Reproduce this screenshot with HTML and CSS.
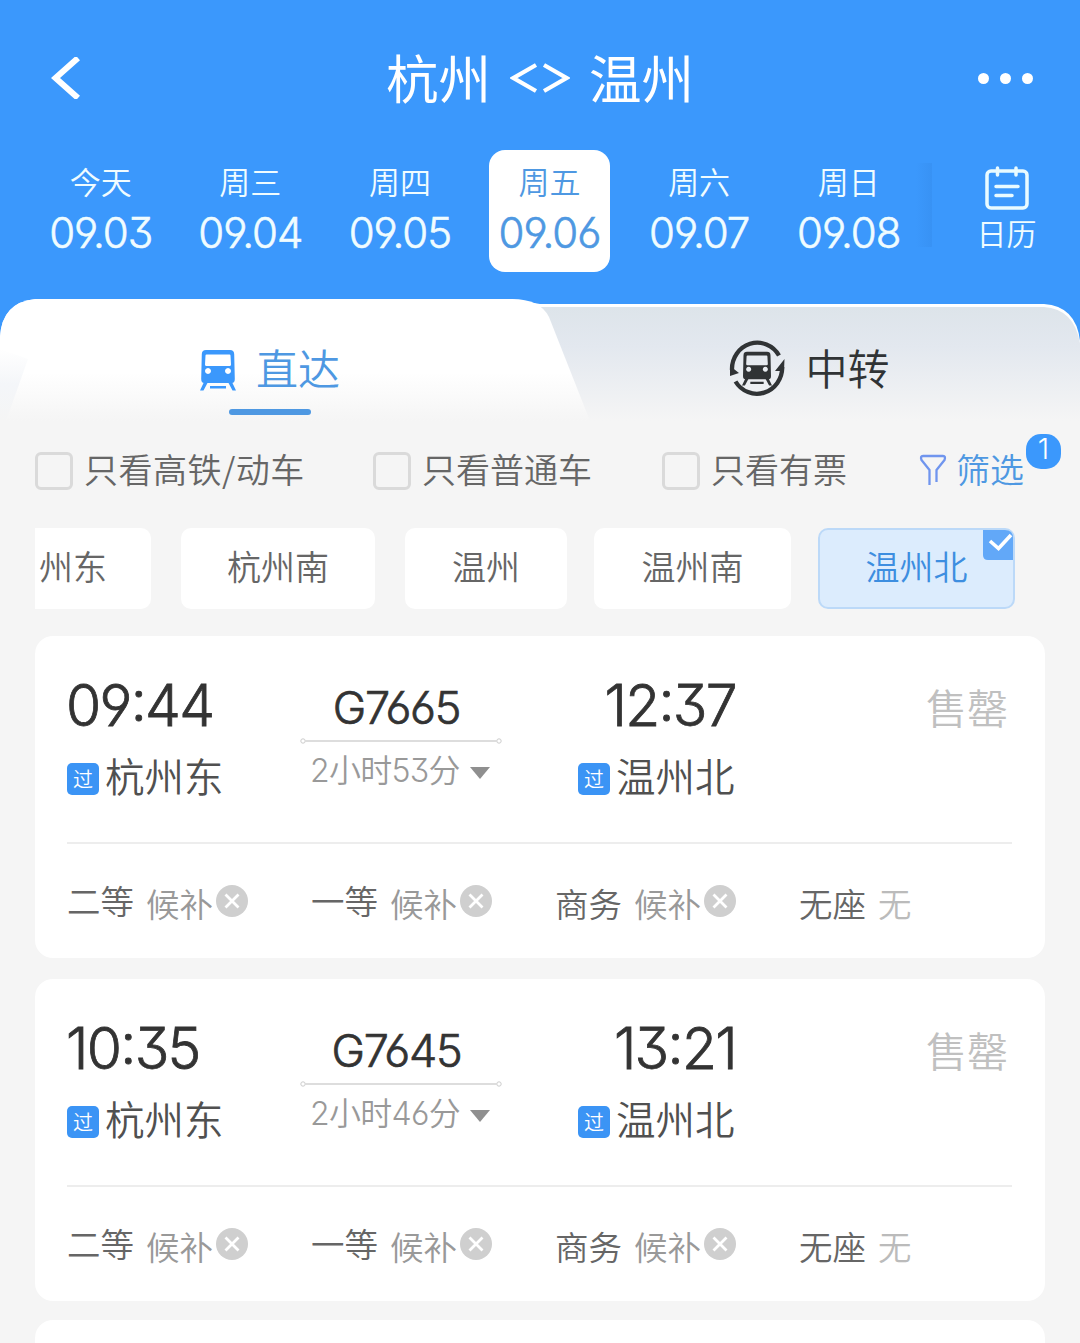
FILE: index.html
```html
<!DOCTYPE html>
<html lang="zh-CN">
<head>
    <meta charset="UTF-8">
    <meta name="viewport" content="width=device-width, initial-scale=1.0">
    <title>杭州 - 温州</title>
    <link rel="stylesheet" href="styles.css">
</head>
<body>
    <!-- shared icons -->
    <svg class="defs" width="0" height="0">
        <symbol id="train" viewBox="0 0 36 42">
            <path fill-rule="evenodd" d="M6 1h24q4 0 4.200 4l.6 25q0 4-3 4H4.200q-3 0-3-4l.6-25Q2 1 6 1zM5.500 6.500l-.5 9q0 1.500 1.500 1.500h23q1.500 0 1.500-1.500l-.5-9q0-1-1-1h-23q-1 0-1 1zM8 19a3 3 0 1 0 .01 0zM28 19a3 3 0 1 0 .01 0z"/>
            <path d="M4 33h4l-4.500 8.500H0zM28 33h4l4 8.500h-3.500zM10 37h16v2.500H10z"/>
        </symbol>
        <symbol id="close" viewBox="0 0 32 32">
            <circle cx="16" cy="16" r="16" fill="#cfcfcf"/>
            <path d="M9.500 9.500l13 13M22.500 9.500l-13 13" stroke="#fff" stroke-width="2.800" fill="none"/>
        </symbol>
        <symbol id="route" viewBox="0 0 202 8">
            <path d="M5.500 4h191" stroke="#d2d2d2" stroke-width="1.500"/>
            <circle cx="3" cy="4" r="2.200" fill="#fff" stroke="#ccc"/>
            <circle cx="199" cy="4" r="2.200" fill="#fff" stroke="#ccc"/>
        </symbol>
    </svg>

    <header class="header">
        <div class="topbar">
            <svg width="30" height="42" viewBox="0 0 30 42"><path d="M27 1L4.500 21 27 41" fill="none" stroke="#fff" stroke-width="6"/></svg>
            <h1 class="title">
                <span>杭州</span>
                <svg width="60" height="32" viewBox="0 0 60 32"><path d="M26 3L3.500 16 26 29M34 3L56.500 16 34 29" fill="none" stroke="#fff" stroke-width="4.200"/></svg>
                <span>温州</span>
            </h1>
            <div class="more"><i></i><i></i><i></i></div>
        </div>
        <nav class="dates">
            <a class="day"><span>今天</span><b>09.03</b></a>
            <a class="day"><span>周三</span><b>09.04</b></a>
            <a class="day"><span>周四</span><b>09.05</b></a>
            <a class="day active"><span>周五</span><b>09.06</b></a>
            <a class="day"><span>周六</span><b>09.07</b></a>
            <a class="day"><span>周日</span><b>09.08</b></a>
            <div class="edge"></div>
            <a class="calendar">
                <svg width="46" height="46" viewBox="0 0 46 46" fill="none" stroke="#e9fbff" stroke-width="3.500" stroke-linecap="round"><rect x="3" y="6" width="40" height="37" rx="4"/><path d="M13.500 3v7M32 3v7M12 21.500h22M12 30.500h16"/></svg>
                <span>日历</span>
            </a>
        </nav>
    </header>

    <section class="tabs">
        <svg class="tabs-bg" width="1080" height="122" viewBox="0 0 1080 122">
            <defs>
                <linearGradient id="gray" x1="0" y1="0" x2="0" y2="1">
                    <stop offset="0" stop-color="#dde4ea"/>
                    <stop offset=".35" stop-color="#e3e8ef"/>
                    <stop offset="1" stop-color="#f5f5f5"/>
                </linearGradient>
                <linearGradient id="white" x1="0" y1="0" x2="0" y2="1">
                    <stop offset="0" stop-color="#fff"/>
                    <stop offset=".6" stop-color="#fff"/>
                    <stop offset="1" stop-color="#f5f5f5"/>
                </linearGradient>
                <linearGradient id="shade" x1="0" y1="0" x2="0" y2="1">
                    <stop offset="0" stop-color="#f4f6f9" stop-opacity="0"/>
                    <stop offset=".5" stop-color="#f4f6f9"/>
                    <stop offset="1" stop-color="#f5f5f5"/>
                </linearGradient>
            </defs>
            <path d="M0 122V38Q2 3 36 0H510L540 5H1044Q1076 7 1080 42V122z" fill="#fff"/>
            <path d="M530 8H1044Q1074 10 1080 44V122H530z" fill="url(#gray)"/>
            <path d="M0 122V38Q2 3 36 0H512Q540 0 549 18L590 122z" fill="url(#white)"/>
            <path d="M0 50L28 60 6 122H0z" fill="url(#shade)"/>
        </svg>
        <a class="tab direct">
            <svg width="36" height="42" fill="#3b98fc"><use href="#train"/></svg>
            <span>直达</span>
        </a>
        <a class="tab transfer">
            <svg width="56" height="60" viewBox="0 0 56 60">
                <g fill="none" stroke="#303335" stroke-width="4.300">
                    <path d="M3 32A25.300 26.300 0 0 1 50 17.500"/>
                    <path d="M53.200 29A25.300 26.300 0 0 1 6.500 43.500"/>
                </g>
                <path d="M1 28v10l9-3zM55.500 21L46 33h9z" fill="#303335"/>
                <svg x="13" y="13" width="30" height="35" fill="#303335"><use href="#train"/></svg>
            </svg>
            <span>中转</span>
        </a>
    </section>

    <section class="filters">
        <label class="check high-speed"><i></i>只看高铁/动车</label>
        <label class="check normal"><i></i>只看普通车</label>
        <label class="check available"><i></i>只看有票</label>
        <a class="filter">
            <svg width="28" height="32" viewBox="0 0 28 32"><path d="M10.500 31V16L2.500 6Q1 2 4 2h20q3 0 1.500 4l-8 10v12" fill="none" stroke="#7095ee" stroke-width="2.300" stroke-linejoin="round"/></svg>
            <span>筛选</span>
            <em>1</em>
        </a>
    </section>

    <section class="stations">
        <a class="chip cut">州东</a>
        <a class="chip">杭州南</a>
        <a class="chip small">温州</a>
        <a class="chip wide">温州南</a>
        <a class="chip wide selected">温州北
            <svg width="30" height="30" viewBox="0 0 30 30"><path d="M0 0H22Q30 0 30 8V30H5Q0 30 0 25z" fill="#62a8f8"/><path d="M7 11l8.500 7.500L28 5" fill="none" stroke="#fff" stroke-width="3.600"/></svg>
        </a>
    </section>

    <main class="list">
        <article class="train">
            <div class="trip">
                <div class="stop">
                    <time>09<u>:</u>44</time>
                    <p><i>过</i>杭州东</p>
                </div>
                <div class="middle">
                    <h2>G7665</h2>
                    <svg width="202" height="8"><use href="#route"/></svg>
                    <p>2小时53分<i></i></p>
                </div>
                <div class="stop arrive">
                    <time>12<u>:</u>37</time>
                    <p><i>过</i>温州北</p>
                </div>
                <div class="sold">售罄</div>
            </div>
            <div class="seats">
                <div class="seat first"><b>二等</b><span>候补</span><svg width="32" height="32"><use href="#close"/></svg></div>
                <div class="seat first"><b>一等</b><span>候补</span><svg width="32" height="32"><use href="#close"/></svg></div>
                <div class="seat"><b>商务</b><span>候补</span><svg width="32" height="32"><use href="#close"/></svg></div>
                <div class="seat none"><b>无座</b><span>无</span></div>
            </div>
        </article>
        <article class="train">
            <div class="trip">
                <div class="stop">
                    <time>10<u>:</u>35</time>
                    <p><i>过</i>杭州东</p>
                </div>
                <div class="middle">
                    <h2>G7645</h2>
                    <svg width="202" height="8"><use href="#route"/></svg>
                    <p>2小时46分<i></i></p>
                </div>
                <div class="stop arrive">
                    <time>13<u>:</u>21</time>
                    <p><i>过</i>温州北</p>
                </div>
                <div class="sold">售罄</div>
            </div>
            <div class="seats">
                <div class="seat first"><b>二等</b><span>候补</span><svg width="32" height="32"><use href="#close"/></svg></div>
                <div class="seat first"><b>一等</b><span>候补</span><svg width="32" height="32"><use href="#close"/></svg></div>
                <div class="seat"><b>商务</b><span>候补</span><svg width="32" height="32"><use href="#close"/></svg></div>
                <div class="seat none"><b>无座</b><span>无</span></div>
            </div>
        </article>
        <article class="train next"></article>
    </main>
</body>
</html>
```

FILE: styles.css
```css
* {
    box-sizing: border-box;
    margin: 0;
    padding: 0;
}
body {
    width: 1080px;
    height: 1343px;
    overflow: hidden;
    background: #f5f5f5;
    font-family: "Noto Sans CJK SC", sans-serif;
    font-weight: 350;
    color: #666;
}
i, em {
    font-style: normal;
}
b, h1, h2 {
    font-weight: inherit;
}
svg {
    display: block;
    flex: none;
}
.defs {
    position: absolute;
}

/* header */
.header {
    height: 345px;
    background: #3b98fc;
    color: #fff;
}
.topbar {
    display: flex;
    justify-content: space-between;
    align-items: center;
    height: 156px;
    margin-bottom: -6px;
    padding: 0 47px 0 51px;
}
.title {
    display: flex;
    align-items: center;
    gap: 19px;
    margin-left: 21px;
    font-size: 52.500px;
    font-weight: 400;
    line-height: 60px;
}
.title span {
    margin-top: -4px;
}
.more {
    display: flex;
    gap: 11px;
}
.more i {
    width: 11px;
    height: 11px;
    border-radius: 50%;
    background: #fff;
}
.dates {
    display: flex;
    padding-left: 40px;
}
.day {
    width: 121.500px;
    height: 121.500px;
    margin-right: 28.100px;
    padding-top: 10px;
    border-radius: 16px;
    text-align: center;
    color: #f0fcff;
}
.day span {
    display: block;
    font-size: 31px;
    line-height: 42px;
}
.day b {
    display: block;
    padding-top: 1px;
    font-family: Inter, sans-serif;
    font-feature-settings: "cv03", "cv04", "cv09";
    font-size: 42px;
    font-weight: 300;
    -webkit-text-stroke: .6px;
    line-height: 60px;
    letter-spacing: -1px;
}
.day.active {
    background: #fff;
    color: #4e98e2;
}
.edge {
    width: 16px;
    height: 84px;
    margin: 13px 0 0 -22px;
    background: linear-gradient(to right, #3b98fc, #3892f4);
}
.calendar {
    display: flex;
    flex-direction: column;
    align-items: center;
    margin: 15px 0 0 45px;
    font-size: 30px;
    line-height: 42px;
    color: #f0fcff;
}

/* tabs */
.tabs {
    position: relative;
    display: grid;
    grid-template-columns: 540px 540px;
    height: 122px;
    margin-top: -46px;
    font-size: 42px;
    line-height: 60px;
}
.tabs-bg {
    position: absolute;
    left: 0;
    top: 0;
}
.tab {
    position: relative;
    display: flex;
    justify-content: center;
    align-items: flex-start;
    gap: 20px;
    padding-top: 38px;
}
.direct {
    color: #4e98e2;
}
.direct svg {
    margin-top: 12px;
}
.direct::after {
    content: "";
    position: absolute;
    left: 229px;
    top: 110px;
    width: 82px;
    height: 6px;
    border-radius: 3px;
    background: #4e98e2;
}
.transfer {
    color: #303335;
}
.transfer > svg {
    margin-top: 1px;
    margin-left: -1px;
}

/* filters */
.filters {
    display: flex;
    height: 107px;
    padding: 23px 0 0 35px;
    font-size: 34px;
    line-height: 50px;
}
.check {
    display: flex;
    gap: 11px;
}
.check i {
    width: 38px;
    height: 38px;
    margin-top: 8px;
    border: 3px solid #dadada;
    border-radius: 6px;
}
.high-speed {
    width: 338px;
    letter-spacing: .5px;
}
.normal {
    width: 289px;
}
.available {
    width: 257px;
}
.filter {
    position: relative;
    display: flex;
    gap: 9px;
    color: #4e98e2;
}
.filter svg {
    margin-top: 10px;
}
.filter em {
    position: absolute;
    left: 107px;
    top: -10px;
    width: 35px;
    height: 35px;
    border-radius: 15px;
    background: #3b98fc;
    color: #fff;
    font-family: Inter, sans-serif;
    font-size: 29px;
    line-height: 29px;
    text-align: center;
}

/* station chips */
.stations {
    display: flex;
    gap: 27px;
    padding-left: 35px;
    font-size: 34px;
    line-height: 76px;
    text-align: center;
}
.chip {
    position: relative;
    width: 194px;
    height: 81px;
    margin-right: 3px;
    border-radius: 10px;
    background: #fff;
}
.chip.cut {
    width: 116px;
    padding-left: 4px;
    border-radius: 0 10px 10px 0;
    text-align: left;
}
.chip.small {
    width: 162px;
    margin-right: 0;
}
.chip.wide {
    width: 197px;
    margin-right: 0;
}
.chip.selected {
    border: 2px solid #bcd9f8;
    background: #dcecfd;
    color: #3d8ee0;
    line-height: 72px;
}
.selected svg {
    position: absolute;
    top: 0;
    right: 0;
}

/* train list */
.list {
    padding: 27px 35px 0;
}
.train {
    height: 322px;
    margin-bottom: 21px;
    padding: 0 33px 0 32px;
    border-radius: 18px;
    background: #fff;
}
.train.next {
    height: 23px;
    margin: -2px 0 0;
    border-radius: 18px 18px 0 0;
}
.trip {
    display: flex;
    height: 208px;
    border-bottom: 2px solid #ededed;
}
.stop {
    width: 233px;
    padding-top: 35px;
}
time {
    display: block;
    margin-left: -1px;
    font-family: Inter, sans-serif;
    font-feature-settings: "cv03", "cv04", "cv09";
    font-size: 57px;
    font-weight: 300;
    -webkit-text-stroke: .8px;
    line-height: 70px;
    letter-spacing: -1.700px;
    color: #333;
}
time u {
    position: relative;
    top: -5px;
    text-decoration: none;
}
.stop p {
    display: flex;
    margin-top: 5px;
    font-size: 39.500px;
    line-height: 58px;
    white-space: nowrap;
    color: #505050;
}
.stop p i {
    width: 32px;
    height: 32px;
    margin: 17px 6px 0 0;
    border-radius: 5px;
    background: #3b94f5;
    color: #fff;
    font-size: 20px;
    line-height: 32px;
    text-align: center;
}
.middle {
    width: 202px;
    padding-top: 47px;
    text-align: center;
}
.middle h2 {
    padding-right: 9px;
    font-family: Inter, sans-serif;
    font-feature-settings: "cv03", "cv04", "cv09";
    font-size: 45px;
    font-weight: 300;
    -webkit-text-stroke: .7px;
    line-height: 50px;
    letter-spacing: -1.200px;
    color: #333;
}
.middle svg {
    margin-top: 4px;
}
.middle p {
    display: flex;
    align-items: center;
    margin-top: 1px;
    padding-left: 10px;
    font-family: Inter, "Noto Sans CJK SC", sans-serif;
    font-feature-settings: "cv03", "cv04", "cv09";
    font-size: 32px;
    line-height: 50px;
    letter-spacing: -.700px;
    color: #999;
}
.middle p i {
    margin: 3px 0 0 10px;
    border: 10px solid transparent;
    border-top: 12px solid #8f8f8f;
    border-bottom: 0;
}
.arrive {
    width: 158px;
    margin-left: 76px;
}
.arrive time {
    text-align: right;
}
.sold {
    margin: 40px 4px 0 auto;
    font-size: 41px;
    line-height: 60px;
    color: #c0c0c0;
}
.seats {
    display: grid;
    grid-template-columns: repeat(4, 244px);
    padding-top: 34px;
    font-size: 33.500px;
    line-height: 50px;
}
.seat {
    display: flex;
}
.seat span {
    margin: 0 3px 0 12px;
    color: #999;
}
.seat svg {
    margin-top: 7px;
}
.seat.first b {
    margin-top: -3px;
}
.seat.none span {
    color: #bbb;
}
```
